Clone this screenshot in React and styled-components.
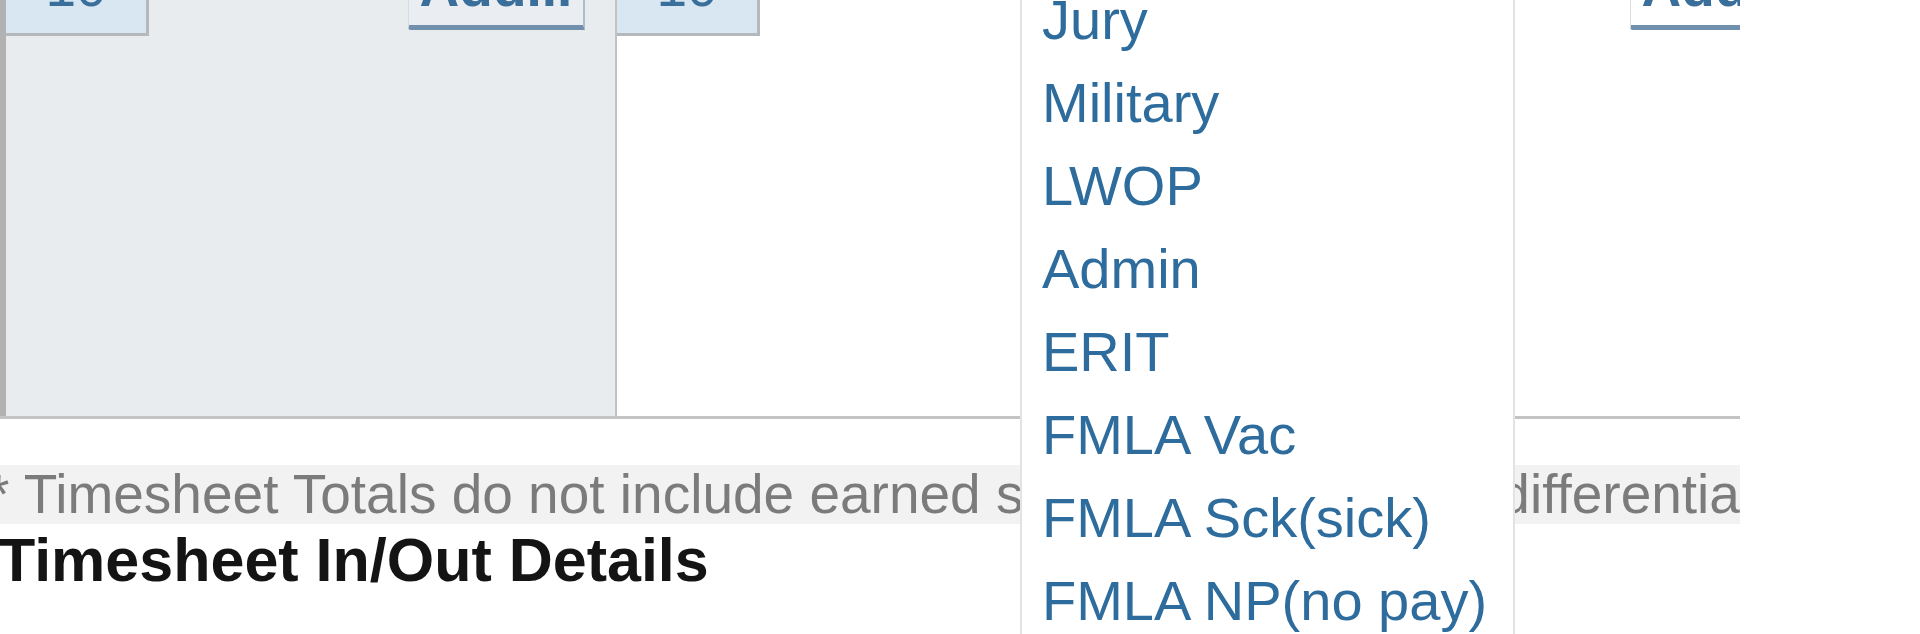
import React from 'react';
import styled, { createGlobalStyle } from 'styled-components';

const font = `'Liberation Sans', Arial, Helvetica, sans-serif`;

const leaveTypes = ['Jury', 'Military', 'LWOP', 'Admin', 'ERIT', 'FMLA Vac', 'FMLA Sck(sick)', 'FMLA NP(no pay)'];

const App = () => {
  return (
    <Page>
      <GlobalStyle />
      <Grid>
        <DayCell $shaded>
          <CellTop>
            <CountButton>10</CountButton>
            <AddButton>Add...</AddButton>
          </CellTop>
        </DayCell>
        <DayCell>
          <CellTop>
            <CountButton>10</CountButton>
            <AddButton $clipped>Add...</AddButton>
          </CellTop>
        </DayCell>
      </Grid>

      <Note>* Timesheet Totals do not include earned standby pay, or shift differential amounts</Note>
      <Heading>Timesheet In/Out Details</Heading>

      <Dropdown>
        {leaveTypes.map((type) => (
          <DropItem key={type}>{type}</DropItem>
        ))}
      </Dropdown>
    </Page>
  );
};

export default App;


const GlobalStyle = createGlobalStyle`
  html, body {
    margin: 0;
    background: #ffffff;
    overflow: hidden;
  }
`;

const Page = styled.div`
  position: relative;
  width: 1740px;
  height: 634px;
  overflow: hidden;
  font-family: ${font};
`;

const Grid = styled.div`
  display: flex;
  height: 416px;
  border-bottom: 3px solid #c4c4c4;
`;

const DayCell = styled.div`
  display: flex;
  flex-direction: column;
  width: ${({ $shaded }) => ($shaded ? '609px' : 'auto')};
  flex: ${({ $shaded }) => ($shaded ? 'none' : '1')};
  background: ${({ $shaded }) => ($shaded ? '#e9ecef' : '#ffffff')};
  border-left: ${({ $shaded }) => ($shaded ? '6px solid #b2b2b2' : 'none')};
  border-right: ${({ $shaded }) => ($shaded ? '2px solid #c2c2c2' : 'none')};
`;

const CellTop = styled.div`
  display: flex;
  align-items: flex-start;
  justify-content: space-between;
  margin-top: -44px;
`;

const CountButton = styled.div`
  box-sizing: border-box;
  width: 143px;
  height: 80px;
  background: #d8e7f2;
  border-right: 3px solid #b6b9bc;
  border-bottom: 3px solid #b6b9bc;
  color: #3a6f9b;
  font-size: 55px;
  line-height: 62px;
  text-align: center;
`;

const AddButton = styled.div`
  box-sizing: border-box;
  width: 177px;
  height: 74px;
  margin-right: ${({ $clipped }) => ($clipped ? '-67px' : '30px')};
  background: ${({ $clipped }) => ($clipped ? '#ffffff' : '#eaeef2')};
  border-left: 1px solid ${({ $clipped }) => ($clipped ? '#dcdcdc' : '#d4dde6')};
  border-right: 2px solid #a9bdd0;
  border-bottom: 5px solid #7190ae;
  border-bottom-left-radius: 3px;
  color: #3a6f9b;
  font-size: 55px;
  font-weight: bold;
  line-height: 62px;
  text-align: center;
`;

const Note = styled.div`
  margin-top: 46px;
  height: 59px;
  background: #f2f2f2;
  color: #7b7b7b;
  font-size: 55px;
  line-height: 59px;
  text-indent: -12px;
  white-space: nowrap;
  overflow: hidden;
`;

const Heading = styled.h2`
  margin: 6px 0 0 -2px;
  color: #141414;
  font-size: 61px;
  font-weight: bold;
  line-height: 60px;
  white-space: nowrap;
`;

const Dropdown = styled.ul`
  position: absolute;
  left: 1020px;
  top: -22px;
  box-sizing: border-box;
  width: 495px;
  margin: 0;
  padding: 0 0 0 20px;
  list-style: none;
  background: #ffffff;
  border-left: 2px solid #e3e3e3;
  border-right: 2px solid #e3e3e3;
`;

const DropItem = styled.li`
  color: #2d6c9c;
  font-size: 56px;
  line-height: 83px;
  white-space: nowrap;
`;
